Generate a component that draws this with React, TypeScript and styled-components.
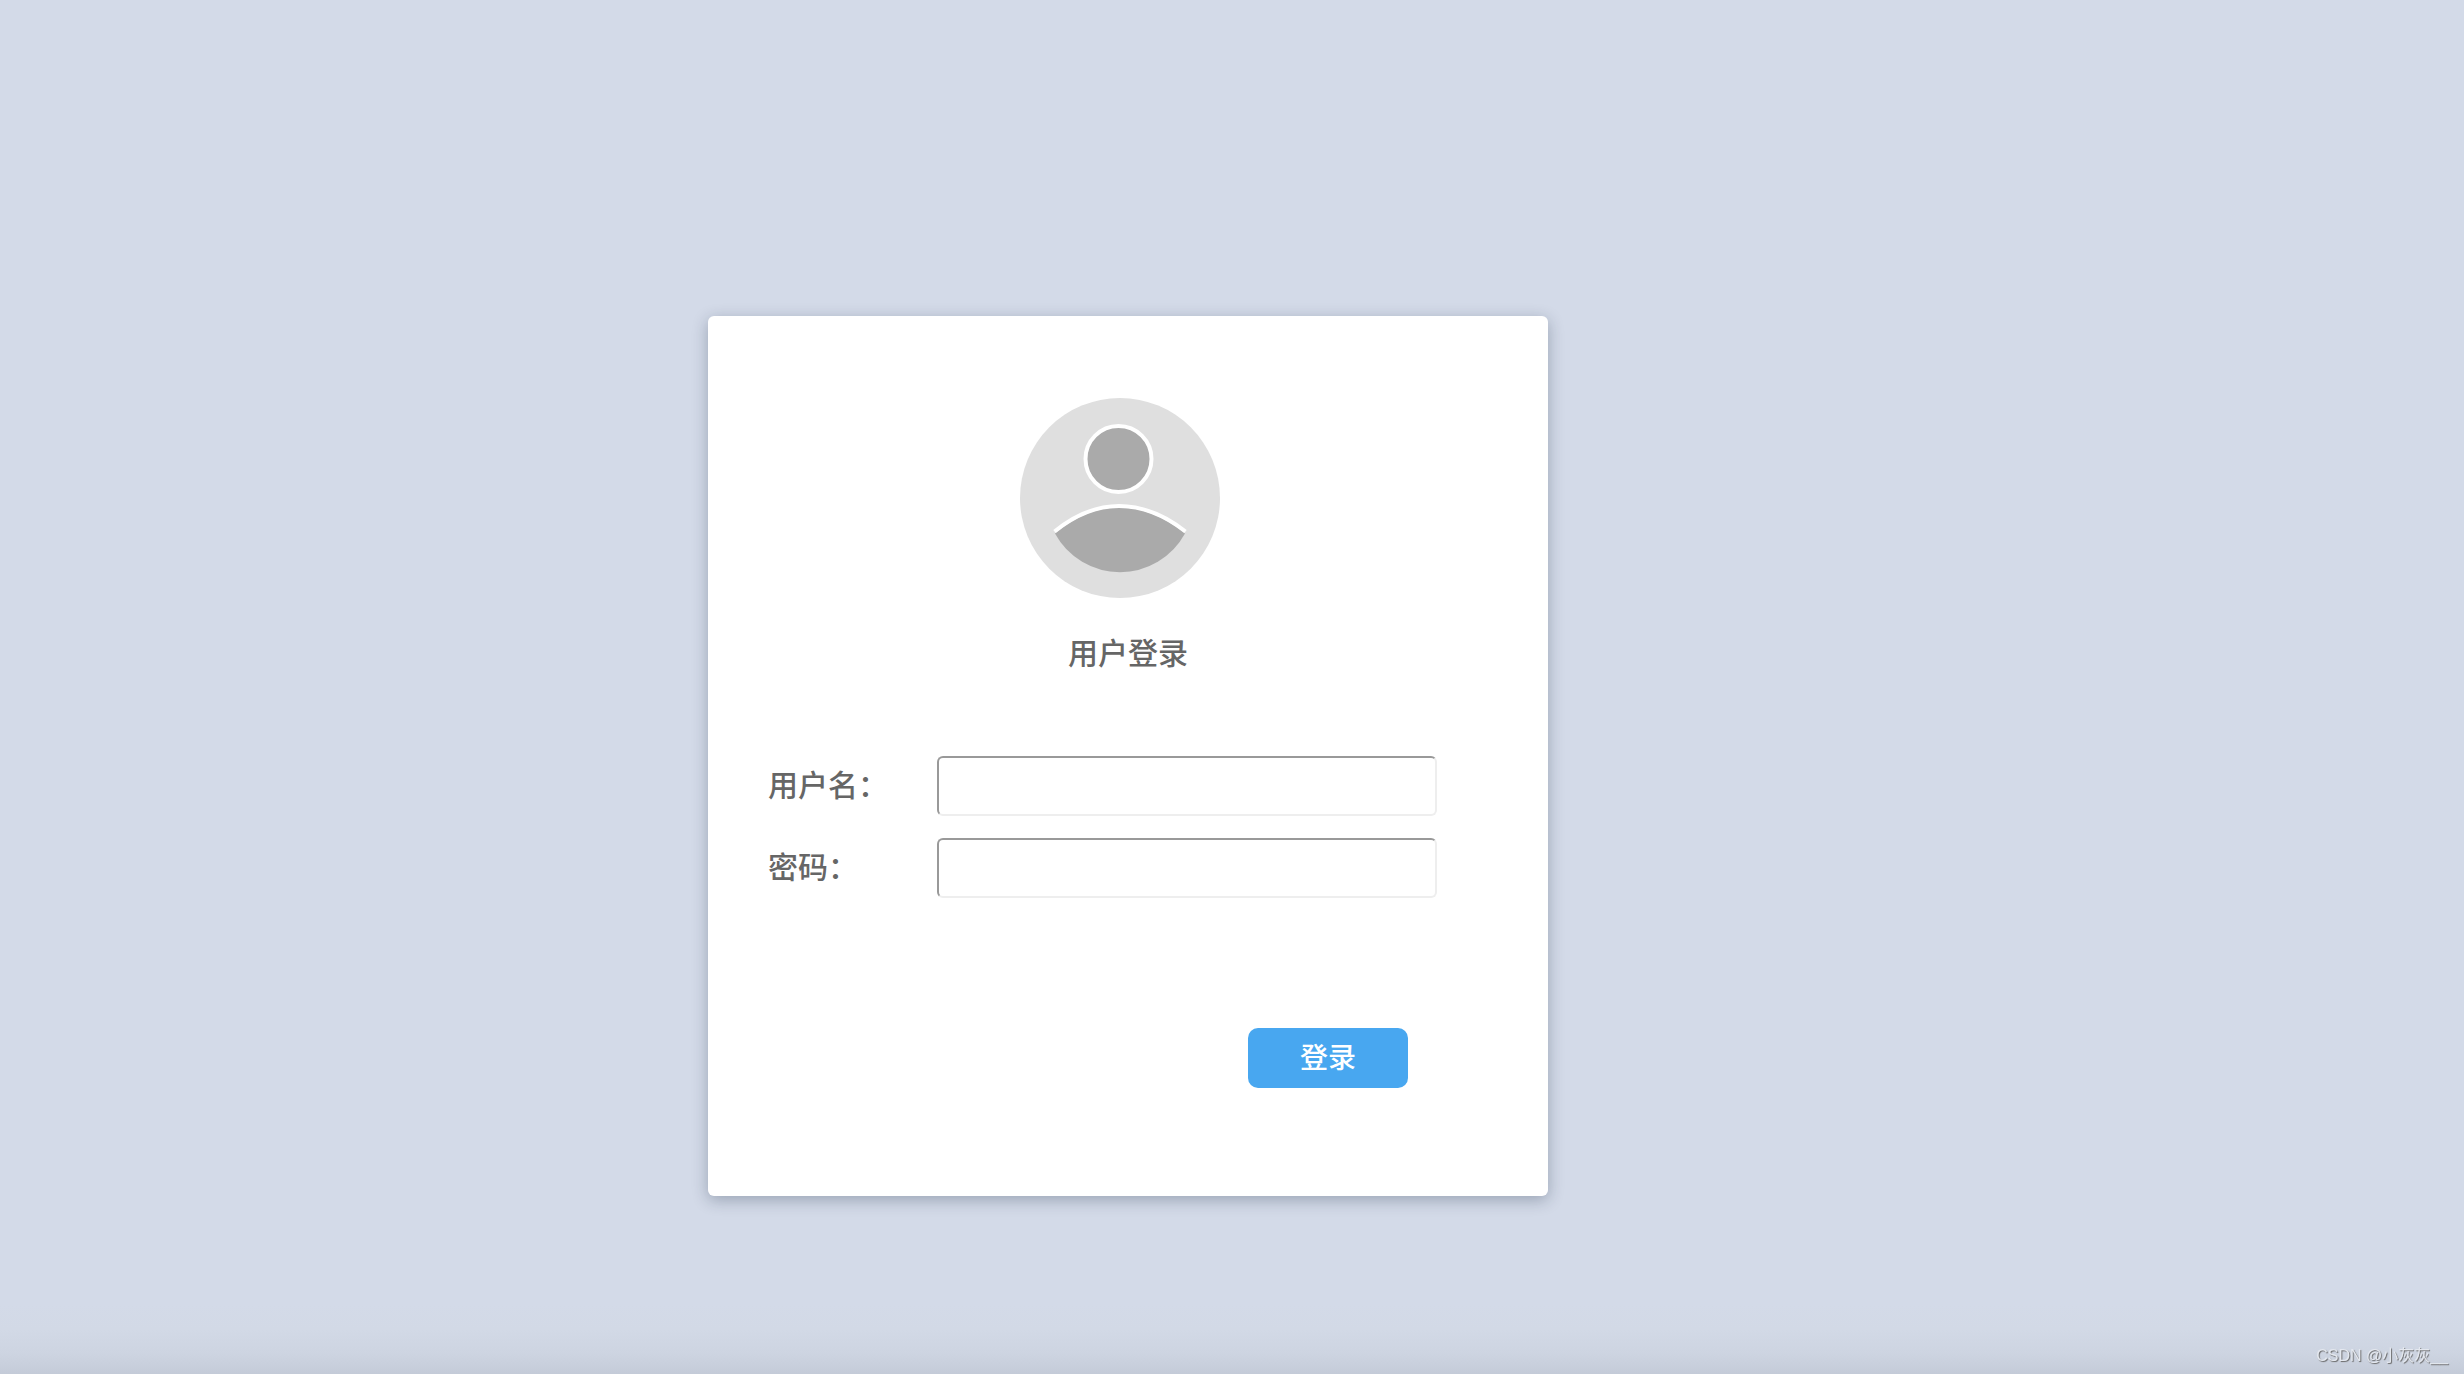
import React, { useState } from "react";
import styled, { createGlobalStyle } from "styled-components";

const GlobalStyle = createGlobalStyle`
  * {
    box-sizing: border-box;
  }
  body {
    margin: 0;
    background: #d3dae8;
    color: #666;
    font-family: "Noto Sans CJK SC", "Noto Sans", sans-serif;
    font-weight: 500;
  }
`;

const Page = styled.main`
  display: flex;
  align-items: flex-start;
  min-height: 100vh;
  padding: 316px 40px 40px 708px;
  background: linear-gradient(to top, #c4cbd8 0, #cdd4e1 20px, #d2d9e6 44px, #d3dae8 70px);

  @media (max-width: 1600px) {
    justify-content: center;
    padding: 80px 40px;
  }
`;

const Card = styled.form`
  display: flex;
  flex-direction: column;
  width: 100%;
  max-width: 840px;
  padding: 82px 60px 108px;
  border-radius: 6px;
  background: #fff;
  box-shadow: 0 4px 16px rgba(20, 35, 60, 0.3);
`;

const Avatar = styled.svg`
  align-self: center;
  width: 200px;
  height: 200px;
  margin-right: 16px;
`;

const Title = styled.h1`
  margin: 30px 0 82px;
  font-size: 30px;
  font-weight: 500;
  line-height: 46px;
  text-align: center;
`;

const Fields = styled.div`
  display: grid;
  gap: 22px;
`;

const Field = styled.div`
  display: grid;
  grid-template-columns: 169px minmax(0, 500px);
  align-items: center;
`;

const Label = styled.label`
  padding-bottom: 6px;
  font-size: 30px;
  line-height: 46px;
`;

const TextInput = styled.input`
  width: 100%;
  height: 60px;
  padding: 0 16px;
  border: 2px solid;
  border-color: #999 #eee #eee #999;
  border-radius: 6px;
  outline: none;
  background: #fff;
  color: inherit;
  font: inherit;
  font-size: 28px;
`;

const Actions = styled.div`
  display: flex;
  justify-content: flex-end;
  margin-top: 130px;
  padding-right: 80px;
`;

const SubmitButton = styled.button`
  width: 160px;
  height: 60px;
  padding: 0 0 4px;
  border: 0;
  border-radius: 10px;
  background: #48a7f0;
  color: #fff;
  font: inherit;
  font-size: 28px;
  line-height: 40px;
  cursor: pointer;
`;

const Watermark = styled.small`
  position: fixed;
  right: 16px;
  bottom: 8px;
  color: #e4e8ef;
  font-family: "Liberation Sans", "Noto Sans CJK SC", sans-serif;
  font-size: 16px;
  font-weight: 400;
  line-height: 20px;
  text-shadow: 1px 1px 1px #666;
`;

interface FormFieldProps {
  id: string;
  label: string;
  type: string;
  autoComplete: string;
}

function FormField({ id, label, type, autoComplete }: FormFieldProps) {
  const [value, setValue] = useState("");
  return (
    <Field>
      <Label htmlFor={id}>{label}</Label>
      <TextInput
        id={id}
        name={id}
        type={type}
        autoComplete={autoComplete}
        value={value}
        onChange={(e) => setValue(e.target.value)}
      />
    </Field>
  );
}

function UserAvatar() {
  return (
    <Avatar viewBox="0 0 200 200" aria-hidden="true">
      <circle cx="100" cy="100" r="100" fill="#dfdfdf" />
      <circle cx="98.5" cy="61" r="33" fill="#aaa" stroke="#fff" strokeWidth="4" />
      <path d="M35 135.5 Q66 109.5 99 109.5 Q133 109.5 165 135.5 A74 74 0 0 1 35 135.5Z" fill="#aaa" />
      <path d="M34.5 133.5 Q66 108 99 108 Q133 108 165.5 133.5" fill="none" stroke="#fff" strokeWidth="4" />
    </Avatar>
  );
}

export default function App() {
  return (
    <>
      <GlobalStyle />
      <Page lang="zh-CN">
        <Card onSubmit={(e) => e.preventDefault()}>
          <UserAvatar />
          <Title>用户登录</Title>
          <Fields>
            <FormField id="username" label="用户名：" type="text" autoComplete="username" />
            <FormField id="password" label="密码：" type="password" autoComplete="current-password" />
          </Fields>
          <Actions>
            <SubmitButton type="submit">登录</SubmitButton>
          </Actions>
        </Card>
      </Page>
      <Watermark lang="zh-CN">CSDN @小灰灰__</Watermark>
    </>
  );
}
